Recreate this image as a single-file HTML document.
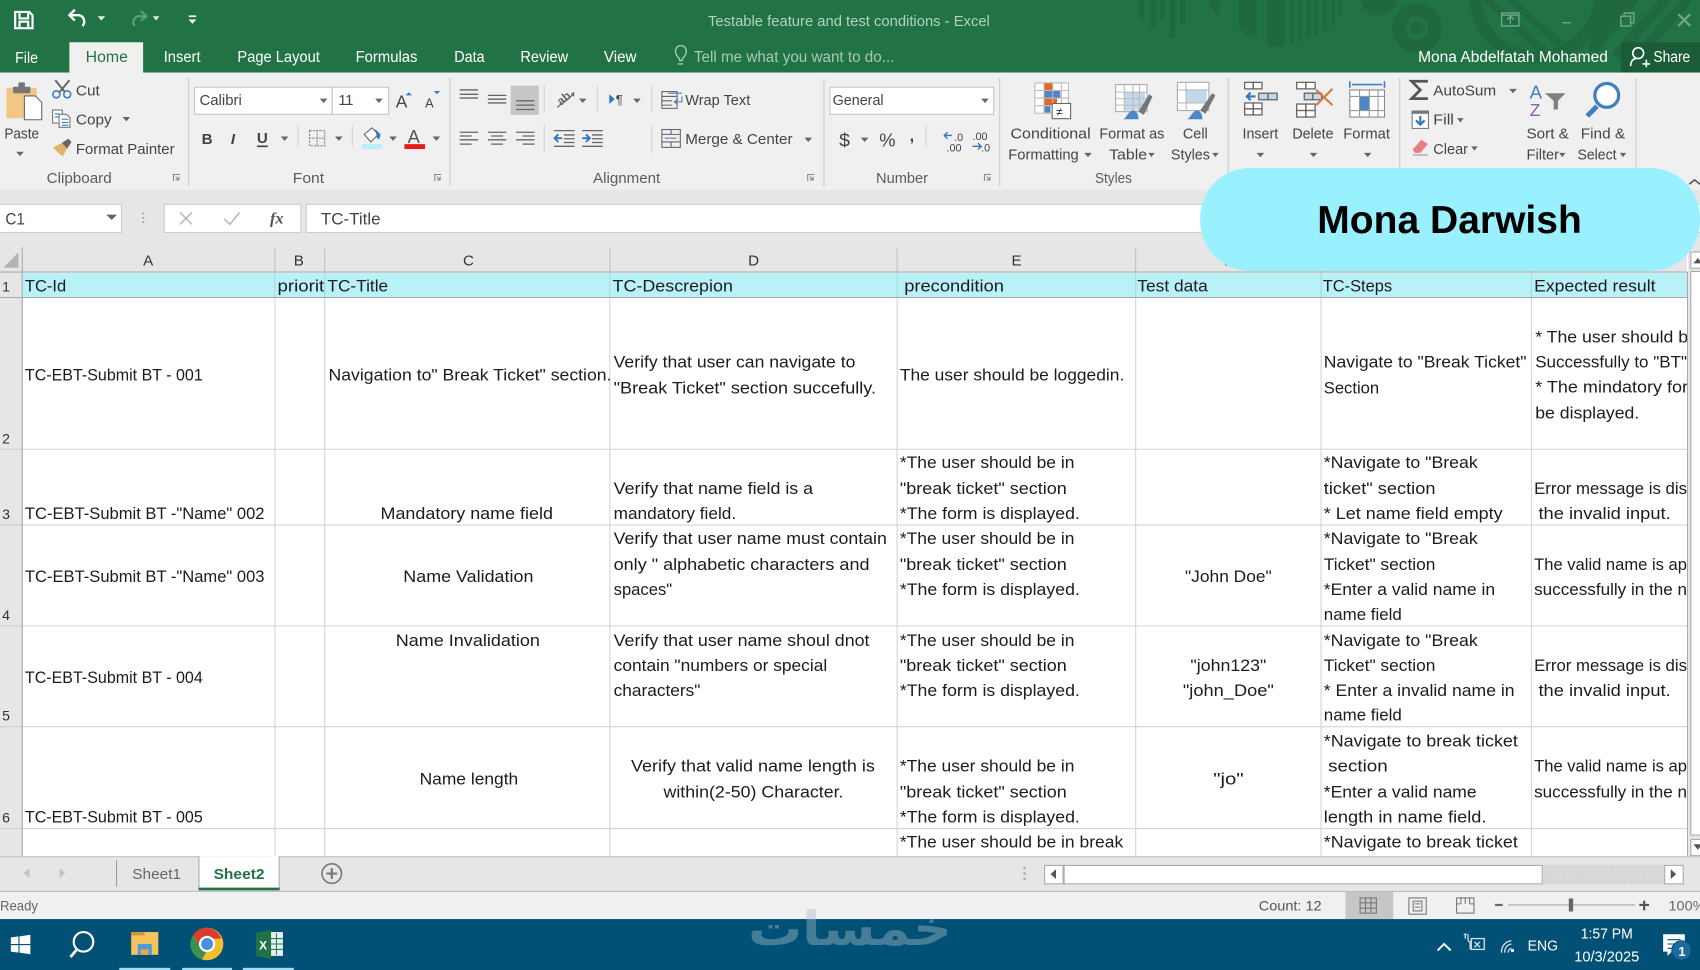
<!DOCTYPE html>
<html><head><meta charset="utf-8"><title>Excel</title>
<style>
html,body{margin:0;padding:0;background:#fff;width:1700px;height:970px;overflow:hidden}
svg{display:block;position:absolute;left:0;top:0}
text{font-family:"Liberation Sans",sans-serif;white-space:pre}
.c text{font-size:15px;fill:#1c1c1c}
.r text{font-size:14px;fill:#444}
.g text{font-size:14px;fill:#5c5c5c}
.t text{font-size:14.5px;fill:#fff}
.h text{font-size:14px;fill:#333}
</style></head><body>
<svg width="1700" height="970" viewBox="0 0 1568 895" preserveAspectRatio="none" xmlns="http://www.w3.org/2000/svg">
<defs><clipPath id="gr"><rect x="21" y="251" width="1535" height="539"/></clipPath>
<clipPath id="bc"><rect x="300" y="251" width="262" height="24"/></clipPath>
<pattern id="dots" width="2" height="2" patternUnits="userSpaceOnUse"><rect width="2" height="2" fill="#dcdcdc"/><rect width="1" height="1" fill="#cfcfcf"/></pattern></defs>

<!-- title bar -->
<rect width="1568" height="67" fill="#217346"/>
<g fill="#1f6840">
<rect x="1050" y="0" width="5" height="18"/><rect x="1061" y="0" width="5" height="26"/><rect x="1070" y="0" width="4" height="18"/><rect x="1079" y="0" width="5" height="35"/><rect x="1089" y="0" width="4" height="22"/>
<path d="M1115 0h10v14l-4-2-6-8z"/><path d="M1143 0h16v36l-8-3-8-6z"/><rect x="1169" y="0" width="16" height="43"/>
<rect x="1190" y="0" width="4" height="41"/><rect x="1197" y="0" width="4" height="38"/><rect x="1205" y="0" width="4" height="35"/><rect x="1212" y="0" width="4" height="33"/><rect x="1220" y="0" width="4" height="28"/><rect x="1228" y="0" width="3" height="23"/><rect x="1235" y="0" width="3" height="15"/>
<circle cx="1272" cy="-3" r="17"/>
<path fill-rule="evenodd" d="M1307 3a23 23 0 1 0 .01 0zM1307 15a11 11 0 1 1-.01 0z"/><circle cx="1307" cy="26" r="6"/>
<path d="M1355 0c3 30 25 58 62 58s62-28 63-58h-10c-1 24-25 47-53 47s-48-22-51-47z"/>
<path d="M1378 0l48 45-7 3-52-48zM1398 0l44 38-6 5-48-43zM1480 0l32 0-40 50-8-4zM1530 0l12 0-48 55-8-5zM1550 0l12 0-48 55-8-5z"/>
</g>
<rect x="1495" y="39" width="73" height="28" fill="#1a5c38"/>
<rect x="64" y="39" width="68" height="28" fill="#f0f0f0"/>
<!-- QAT -->
<g fill="none" stroke="#fff" stroke-width="2">
<path d="M14 11h13l3 3v12H14zM18 11v6h8v-6M18 26v-6h8v6"/>
<path d="M69 9l-5 5 5 5M64 14h9a6 6 0 0 1 3 10" stroke-width="2.200"/>
<path d="M130 10l5 5-5 4M135 15h-8a6 6 0 0 0-3 9" stroke="#5f9d7b"/>
<path d="M174 15h7" stroke-width="1.500"/>
</g>
<path d="M90 15h7l-3.500 4zM141 15h6l-3 4z" fill="#e6f0ea"/><path d="M174 18h7l-3.500 4z" fill="#fff"/>
<g class="t">
<text x="653" y="24" textLength="260" lengthAdjust="spacingAndGlyphs" style="font-size:14px;fill:#b4d2c1">Testable feature and test conditions - Excel</text>
<text x="14" y="58" textLength="21" lengthAdjust="spacingAndGlyphs">File</text>
<text x="79" y="57" textLength="39" lengthAdjust="spacingAndGlyphs" style="fill:#217346">Home</text>
<text x="151" y="57" textLength="34" lengthAdjust="spacingAndGlyphs">Insert</text>
<text x="219" y="57" textLength="76" lengthAdjust="spacingAndGlyphs">Page Layout</text>
<text x="328" y="57" textLength="57" lengthAdjust="spacingAndGlyphs">Formulas</text>
<text x="419" y="57" textLength="28" lengthAdjust="spacingAndGlyphs">Data</text>
<text x="480" y="57" textLength="44" lengthAdjust="spacingAndGlyphs">Review</text>
<text x="557" y="57" textLength="30" lengthAdjust="spacingAndGlyphs">View</text>
<text x="640" y="57" textLength="185" lengthAdjust="spacingAndGlyphs" style="fill:#a6c9b6">Tell me what you want to do...</text>
<text x="1308" y="57" textLength="175" lengthAdjust="spacingAndGlyphs">Mona Abdelfatah Mohamed</text>
<text x="1525" y="57" textLength="34" lengthAdjust="spacingAndGlyphs">Share</text>
</g>
<path d="M627 56c0-3-4-4-4-9a5 5 0 0 1 10 0c0 5-4 6-4 9zM625 59h5" fill="none" stroke="#a6c9b6" stroke-width="1.300"/>
<g fill="none" stroke="#fff" stroke-width="1.500"><circle cx="1511" cy="49" r="5"/><path d="M1504 61c0-5 3-7 5-7M1515 59h7M1518.500 55v7"/></g>
<g fill="none" stroke="#6ea78a" stroke-width="1.300"><rect x="1385" y="12" width="16" height="12"/><path d="M1393 22v-6M1390 18l3-3 3 3M1385 14h16"/><path d="M1441 21h8"/><rect x="1495" y="15" width="9" height="9"/><path d="M1498 15v-3h9v9h-3"/><path d="M1548 13l11 11M1559 13l-11 11" stroke-width="2"/></g>

<!-- ribbon -->
<rect y="67" width="1568" height="108" fill="#f0f0f0"/>
<g stroke="#d2d2d2" stroke-width="1.200"><path d="M174 72v100M415 72v100M760 72v100M922 72v100M1133 72v100M1291 72v100M1509 72v100"/>
<path d="M502 79v25M551 79v25M601 79v25M502 115v26M601 115v26M275 116v19M325 116v19M854 116v19" stroke="#d8d8d8"/></g>
<!-- clipboard group -->
<rect x="6" y="81" width="28" height="28" rx="1" fill="#f2c684"/><rect x="12" y="80" width="16" height="6" rx="1" fill="#777"/><rect x="17" y="76" width="6" height="5" rx="1" fill="#777"/>
<path d="M22.500 88.500h10l6 6v16h-16z" fill="#fff" stroke="#666"/>
<g fill="none" stroke="#666" stroke-width="1.800"><path d="M51 74l9 11M64 74l-9 11"/></g><g fill="none" stroke="#3f7fc2" stroke-width="1.500"><circle cx="52" cy="87" r="3.200"/><circle cx="62" cy="87" r="3.200"/></g>
<g fill="#fff" stroke="#777"><rect x="48.500" y="101.500" width="9" height="12"/><path d="M54.500 105.500h7l3 3v9h-10z"/></g><path d="M50.500 105h4M50.500 108h4M57 110h6M57 113h6M57 115.500h6" stroke="#3f7fc2"/>
<path d="M49 136l8-4 5 5-4 7c-3-1-6-5-9-8z" fill="#e2b36b"/><path d="M57 132l6-4 3 3-4 6z" fill="#666"/>
<g class="r">
<text x="70" y="88" textLength="22" lengthAdjust="spacingAndGlyphs">Cut</text>
<text x="70" y="115" textLength="33" lengthAdjust="spacingAndGlyphs">Copy</text>
<text x="70" y="142" textLength="91" lengthAdjust="spacingAndGlyphs">Format Painter</text>
<text x="4" y="128" textLength="32" lengthAdjust="spacingAndGlyphs">Paste</text>
<text x="632" y="97" textLength="60" lengthAdjust="spacingAndGlyphs">Wrap Text</text>
<text x="632" y="133" textLength="99" lengthAdjust="spacingAndGlyphs">Merge &amp; Center</text>
<text x="932" y="128" textLength="74" lengthAdjust="spacingAndGlyphs">Conditional</text>
<text x="930" y="147" textLength="65" lengthAdjust="spacingAndGlyphs">Formatting</text>
<text x="1014" y="128" textLength="60" lengthAdjust="spacingAndGlyphs">Format as</text>
<text x="1023" y="147" textLength="35" lengthAdjust="spacingAndGlyphs">Table</text>
<text x="1091" y="128" textLength="23" lengthAdjust="spacingAndGlyphs">Cell</text>
<text x="1080" y="147" textLength="36" lengthAdjust="spacingAndGlyphs">Styles</text>
<text x="1146" y="128" textLength="33" lengthAdjust="spacingAndGlyphs">Insert</text>
<text x="1192" y="128" textLength="38" lengthAdjust="spacingAndGlyphs">Delete</text>
<text x="1239" y="128" textLength="43" lengthAdjust="spacingAndGlyphs">Format</text>
<text x="1322" y="88" textLength="58" lengthAdjust="spacingAndGlyphs">AutoSum</text>
<text x="1322" y="115" textLength="19" lengthAdjust="spacingAndGlyphs">Fill</text>
<text x="1322" y="142" textLength="32" lengthAdjust="spacingAndGlyphs">Clear</text>
<text x="1408" y="128" textLength="39" lengthAdjust="spacingAndGlyphs">Sort &amp;</text>
<text x="1408" y="147" textLength="30" lengthAdjust="spacingAndGlyphs">Filter</text>
<text x="1458" y="128" textLength="41" lengthAdjust="spacingAndGlyphs">Find &amp;</text>
<text x="1455" y="147" textLength="36" lengthAdjust="spacingAndGlyphs">Select</text>
</g>
<g class="g">
<text x="43" y="169" textLength="60" lengthAdjust="spacingAndGlyphs">Clipboard</text>
<text x="270" y="169" textLength="29" lengthAdjust="spacingAndGlyphs">Font</text>
<text x="547" y="169" textLength="62" lengthAdjust="spacingAndGlyphs">Alignment</text>
<text x="808" y="169" textLength="48" lengthAdjust="spacingAndGlyphs">Number</text>
<text x="1010" y="169" textLength="34" lengthAdjust="spacingAndGlyphs">Styles</text>
</g>
<!-- launchers -->
<g fill="none" stroke="#888"><path d="M160 167v-6h6M165 166l-3-3M165 163v3h-3M401 167v-6h6M406 166l-3-3M406 163v3h-3M745 167v-6h6M750 166l-3-3M750 163v3h-3M908 167v-6h6M913 166l-3-3M913 163v3h-3"/></g>
<!-- font -->
<rect x="179.500" y="80.500" width="127" height="25" fill="#fff" stroke="#c6c6c6"/><rect x="306.500" y="80.500" width="52" height="25" fill="#fff" stroke="#c6c6c6"/>
<rect x="765.500" y="80.500" width="151" height="25" fill="#fff" stroke="#c6c6c6"/>
<g class="r"><text x="184" y="97" textLength="39" lengthAdjust="spacingAndGlyphs">Calibri</text><text x="312" y="97" textLength="14">11</text>
<text x="768" y="97" textLength="47" lengthAdjust="spacingAndGlyphs">General</text></g>
<g class="r">
<text x="186" y="133" style="font-weight:bold;font-size:14px">B</text>
<text x="213" y="133" style="font-style:italic;font-weight:bold;font-size:14px">I</text>
<text x="237" y="132" style="font-weight:bold;font-size:14px">U</text>
<text x="365" y="99" style="font-size:16px">A</text><text x="392" y="99" style="font-size:12px">A</text>
<text x="376" y="132" style="font-size:17px;fill:#555">A</text></g>
<path d="M237 135h10" stroke="#444" stroke-width="1.500"/>
<path d="M374 88l3-3 3 3zM400 84h6l-3 3z" fill="#3f7fc2"/>
<rect x="373" y="133" width="19" height="4.500" fill="#e81c1c"/><rect x="334" y="133" width="18" height="4.500" fill="#b8f0f7"/>
<path d="M336 124l7-6 6 6-7 7z" fill="#fff" stroke="#666"/><path d="M346 119l5 5-1 4h-2z" fill="#2f78c0"/>
<g fill="none" stroke="#888" stroke-dasharray="2 1"><rect x="285.500" y="120.500" width="14" height="14"/><path d="M292.500 120v14M285 127.500h15"/></g>
<path d="M295 91h7l-3.500 4zM346 91h7l-3.500 4zM259 126h7l-3.500 4zM309 126h7l-3.500 4zM359 126h7l-3.500 4zM399 126h7l-3.500 4zM15 140h7l-3.500 4zM113 108h7l-3.500 4z M534 91h7l-3.500 4zM584 91h7l-3.500 4zM742 127h7l-3.500 4zM905 91h7l-3.500 4zM794 127h7l-3.500 4zM1000 141h7l-3.500 4zM1059 141h6l-3 4zM1118 141h6l-3 4zM1159 141h7l-3.500 4zM1208 141h7l-3.500 4zM1258 141h7l-3.500 4zM1392 82h7l-3.500 4zM1344 109h6l-3 4zM1357 135h6l-3 4zM1438 141h6l-3 4zM1494 141h6l-3 4z" fill="#666"/>
<rect x="471" y="79" width="26" height="27" fill="#c6c6c6"/>
<g stroke="#666" stroke-width="1.200" fill="none">
<path d="M424 83h17M424 87h17M424 90.500h17M450 88h17M450 91.500h17M450 95h17M476 93h17M476 97h17M476 101h17"/>
<path d="M424 122h17M424 125.500h11M424 129h17M424 133h11M450 122h17M453 125.500h11M450 129h17M453 133h11M476 122h17M482 125.500h11M476 129h17M482 133h11"/>
<path d="M511 120.500h19M520 124.500h10M520 128h10M520 131.500h10M511 135h19M537 120.500h19M546 124.500h10M546 128h10M546 131.500h10M537 135h19"/>
<path d="M514 99l15-12M527 86l2 2 0-3"/>
</g>
<path d="M518.500 127.500h-7m3.500-3.500l-3.500 3.500 3.500 3.500" stroke="#2f78c0" fill="none" stroke-width="1.800"/><path d="M537 127.500h7m-3.500-3.500l3.500 3.500-3.500 3.500" stroke="#2f78c0" fill="none" stroke-width="1.800"/>
<text x="514" y="96" transform="rotate(-40 518 92)" style="font-size:11px;font-weight:bold" fill="#666">ab</text>
<path d="M562 87l5 4.500-5 4.500z" fill="#2f78c0"/><text x="568" y="96" style="font-size:12px" fill="#444">¶</text>
<!-- wrap / merge -->
<g fill="none" stroke="#666"><rect x="610.500" y="84.500" width="14" height="15.500"/><path d="M610 89h14M610 93h10M610 97h10"/><path d="M616 86h13M629 89v5h-7m3-2.500l-3 2.500 3 2.500" stroke="#3f7fc2"/></g>
<g fill="none" stroke="#666"><rect x="610.500" y="119.500" width="17" height="16.500"/><path d="M610 124h17M610 131h17M619 119v5M619 131v5"/><path d="M613 127.500h11" stroke="#3f7fc2"/></g>
<!-- number -->
<g class="r"><text x="774" y="135" textLength="10" lengthAdjust="spacingAndGlyphs" style="font-size:17px">$</text><text x="811" y="135" textLength="15" lengthAdjust="spacingAndGlyphs" style="font-size:17px">%</text><text x="839" y="130" style="font-size:15px;font-weight:bold">,</text>
<text x="880" y="130" style="font-size:10px">.0</text><text x="873" y="140" style="font-size:10px">.00</text><text x="897" y="129" style="font-size:10px">.00</text><text x="905" y="140" style="font-size:10px">.0</text></g>
<path d="M878 125h-7m3-3l-3 3 3 3M897 135h8m-3-3l3 3-3 3" stroke="#2f78c0" fill="none" stroke-width="1.300"/>
<!-- conditional -->
<rect x="954" y="76" width="32" height="28" fill="#fff"/>
<rect x="963" y="76" width="8" height="7" fill="#e8642a"/><rect x="963" y="83" width="15" height="7" fill="#4d86c6"/><rect x="963" y="90" width="12" height="7" fill="#e8642a"/><rect x="963" y="97" width="6" height="7" fill="#4d86c6"/>
<path d="M954.500 76.500h31v28h-31zM954 83.500h32M954 90.500h32M954 97.500h32M963 76v28M971 76v28M979 76v28" stroke="#bbb" fill="none"/>
<rect x="970.500" y="95.500" width="17" height="14" fill="#fff" stroke="#666"/><text x="974" y="107" style="font-size:11px" fill="#333">≠</text>
<rect x="1029" y="78" width="29" height="25" fill="#fff" stroke="#aaa"/><rect x="1037" y="85" width="19" height="17" fill="#c4d8ec"/><path d="M1029 85h29M1029 91h29M1029 97h29M1037 78v25M1045 78v25M1051 78v25" stroke="#bbb" fill="none"/>
<path d="M1050 103l10-16 3 2-8 17z" fill="#777"/><path d="M1036 110c3-1 5-8 9-8 3 0 5 3 5 8z" fill="#4d86c6"/>
<rect x="1086" y="76" width="29" height="26" fill="#fff" stroke="#aaa"/><rect x="1094" y="83" width="19" height="12" fill="#c4d8ec"/><path d="M1086 83h29M1094 76v26M1086 95h29" stroke="#bbb" fill="none"/>
<path d="M1107 102l11-16 3 2-9 17z" fill="#777"/><path d="M1095 110c3-1 5-8 9-8 3 0 5 3 5 8z" fill="#4d86c6"/>
<!-- insert delete format -->
<g fill="#fff" stroke="#666" stroke-width="1.200"><rect x="1148" y="76" width="8" height="6"/><rect x="1156" y="76" width="8" height="6"/><rect x="1148" y="95" width="8" height="5.500"/><rect x="1156" y="95" width="8" height="5.500"/><rect x="1148" y="100.500" width="8" height="5.500"/><rect x="1156" y="100.500" width="8" height="5.500"/>
<rect x="1161" y="86" width="8.500" height="6" fill="#c4d8ec"/><rect x="1169.500" y="86" width="8.500" height="6" fill="#c4d8ec"/>
<rect x="1196" y="76" width="8.500" height="6"/><rect x="1204.500" y="76" width="8.500" height="6"/><rect x="1196" y="96" width="8.500" height="6"/><rect x="1204.500" y="96" width="8.500" height="6"/><rect x="1196" y="102" width="8.500" height="6"/><rect x="1204.500" y="102" width="8.500" height="6"/><rect x="1203" y="86" width="8" height="6" fill="#c4d8ec"/><rect x="1211" y="86" width="8" height="6" fill="#c4d8ec"/></g>
<path d="M1158 89h-8m3.500-3.500l-3.500 3.500 3.500 3.500" stroke="#2f78c0" fill="none" stroke-width="2"/>
<path d="M1214 83l15 14M1229 82l-15 15" stroke="#d9773d" stroke-width="2"/>
<rect x="1245" y="83" width="32" height="25" fill="#fff" stroke="#888"/><rect x="1254" y="89" width="9" height="13" fill="#4d86c6"/><path d="M1245 89h32M1245 102h32M1254 83v25M1263 83v25M1271 83v25" stroke="#999" fill="none"/>
<path d="M1245 75v6M1277 75v6M1247 78h28" stroke="#3f7fc2" fill="none" stroke-width="1.500"/>
<!-- editing -->
<path d="M1317 75h-15l8 8-8 8h15" fill="none" stroke="#555" stroke-width="2.500"/>
<rect x="1302.500" y="102.500" width="15" height="16" fill="#fff" stroke="#777"/><rect x="1302" y="102" width="16" height="3" fill="#777"/><path d="M1310 107v8m-4-4l4 4 4-4" stroke="#2f78c0" fill="none" stroke-width="2"/>
<path d="M1303 138l8-9 6 4-7 8h-5z" fill="#e77f7f"/><path d="M1303 143h14" stroke="#999"/>
<text x="1411" y="91" style="font-size:17px" fill="#3f7fc2">A</text><text x="1411" y="107" style="font-size:16px" fill="#8c5fa8">Z</text>
<path d="M1425 86h19l-7 7v8h-4v-8z" fill="#808080"/>
<circle cx="1482" cy="88" r="11" fill="#fff" stroke="#3f7fc2" stroke-width="3"/><path d="M1473 98l-9 9" stroke="#3f7fc2" stroke-width="4.500"/>
<path d="M1558 170l5-4 5 4" stroke="#555" fill="none" stroke-width="1.500"/>

<!-- formula bar -->
<rect y="175" width="1568" height="53" fill="#e6e6e6"/>
<rect x="-1" y="188.500" width="113" height="26" fill="#fff" stroke="#ccc"/>
<rect x="151.500" y="188.500" width="126" height="26" fill="#fff" stroke="#ccc"/>
<rect x="282.500" y="188.500" width="1286" height="26" fill="#fff" stroke="#ccc"/>
<path d="M98 198h10l-5 5z" fill="#666"/><circle cx="132" cy="197" r="1" fill="#aaa"/><circle cx="132" cy="201" r="1" fill="#aaa"/><circle cx="132" cy="205" r="1" fill="#aaa"/>
<path d="M166 196l11 11M177 196l-11 11" stroke="#bbb" stroke-width="1.500"/><path d="M207 202l5 5 9-11" fill="none" stroke="#bbb" stroke-width="1.500"/>
<text x="249" y="206" style="font-family:'Liberation Serif',serif;font-style:italic;font-size:15px;font-weight:bold" fill="#555">fx</text>
<g class="c"><text x="5" y="207" textLength="18" lengthAdjust="spacingAndGlyphs" style="fill:#444">C1</text>
<text x="296" y="207" textLength="55" lengthAdjust="spacingAndGlyphs" style="fill:#444">TC-Title</text></g>

<!-- grid -->
<rect x="21" y="251" width="1535" height="539" fill="#fff"/>
<rect x="21" y="252" width="1535" height="22" fill="#b9f1f8"/>
<rect y="228" width="1556" height="23" fill="#e6e6e6"/><rect y="251" width="21" height="539" fill="#e6e6e6"/>
<path d="M17 233v14H3z" fill="#b4b4b4"/>
<g stroke="#d4d4d4" fill="none">
<path d="M253.500 274v516M299.500 274v516M562.500 274v516M827.500 274v516M1047.500 274v516M1218.500 274v516M1412.500 274v516"/>
<path d="M253.500 252v22M299.500 252v22M562.500 252v22M827.500 252v22M1047.500 252v22M1218.500 252v22M1412.500 252v22" stroke="#a8d8de"/>
<path d="M21 414.500h1535M21 484.500h1535M21 577.500h1535M21 670.500h1535M21 764.500h1535"/>
<path d="M253.500 229v22M299.500 229v22M562.500 229v22M827.500 229v22M1047.500 229v22M1218.500 229v22M1412.500 229v22" stroke="#c0c0c0"/>
<path d="M0 274.500h20M0 414.500h20M0 484.500h20M0 577.500h20M0 670.500h20M0 764.500h20" stroke="#cfcfcf"/>
</g>
<path d="M0 251h1556M0 274.500h1556" stroke="#a9a9a9" fill="none"/><path d="M20.500 228v562M1556.500 251v539" stroke="#a9a9a9"/>
<g class="h">
<text x="132" y="245">A</text><text x="271" y="245">B</text><text x="427" y="245">C</text><text x="690" y="245">D</text><text x="933" y="245">E</text><text x="1129" y="245">F</text>
<text x="2" y="269" style="font-size:13px">1</text><text x="2" y="409" style="font-size:13px">2</text><text x="2" y="479" style="font-size:13px">3</text><text x="2" y="572" style="font-size:13px">4</text><text x="2" y="665" style="font-size:13px">5</text><text x="2" y="759" style="font-size:13px">6</text>
</g>
<g class="c" clip-path="url(#gr)">
<text x="23" y="269" textLength="38" lengthAdjust="spacingAndGlyphs">TC-Id</text>
<text x="256" y="269" textLength="43" lengthAdjust="spacingAndGlyphs">priorit</text>
<text x="302" y="269" textLength="56" lengthAdjust="spacingAndGlyphs">TC-Title</text>
<text x="565" y="269" textLength="111" lengthAdjust="spacingAndGlyphs">TC-Descrepion</text>
<text x="834" y="269" textLength="92" lengthAdjust="spacingAndGlyphs">precondition</text>
<text x="1049" y="269" textLength="65" lengthAdjust="spacingAndGlyphs">Test data</text>
<text x="1220" y="269" textLength="64" lengthAdjust="spacingAndGlyphs">TC-Steps</text>
<text x="1415" y="269" textLength="112" lengthAdjust="spacingAndGlyphs">Expected result</text>

<text x="23" y="351" textLength="164" lengthAdjust="spacingAndGlyphs">TC-EBT-Submit BT - 001</text>
<text x="303" y="351" textLength="261" lengthAdjust="spacingAndGlyphs">Navigation to" Break Ticket" section.</text>
<text x="566" y="339" textLength="223" lengthAdjust="spacingAndGlyphs">Verify that user can navigate to</text>
<text x="566" y="363" textLength="242" lengthAdjust="spacingAndGlyphs">"Break Ticket" section succefully.</text>
<text x="830" y="351" textLength="207" lengthAdjust="spacingAndGlyphs">The user should be loggedin.</text>
<text x="1221" y="339" textLength="187" lengthAdjust="spacingAndGlyphs">Navigate to "Break Ticket"</text>
<text x="1221" y="363" textLength="51" lengthAdjust="spacingAndGlyphs">Section</text>
<text x="1416" y="316" textLength="141" lengthAdjust="spacingAndGlyphs">* The user should b</text>
<text x="1416" y="339" textLength="140" lengthAdjust="spacingAndGlyphs">Successfully to "BT"</text>
<text x="1416" y="362" textLength="141" lengthAdjust="spacingAndGlyphs">* The mindatory for</text>
<text x="1416" y="386" textLength="96" lengthAdjust="spacingAndGlyphs">be displayed.</text>

<text x="23" y="479" textLength="221" lengthAdjust="spacingAndGlyphs">TC-EBT-Submit BT -"Name" 002</text>
<text x="351" y="479" textLength="159" lengthAdjust="spacingAndGlyphs">Mandatory name field</text>
<text x="566" y="456" textLength="184" lengthAdjust="spacingAndGlyphs">Verify that name field is a</text>
<text x="566" y="479" textLength="113" lengthAdjust="spacingAndGlyphs">mandatory field.</text>
<text x="830" y="432" textLength="161" lengthAdjust="spacingAndGlyphs">*The user should be in</text>
<text x="830" y="456" textLength="154" lengthAdjust="spacingAndGlyphs">"break ticket" section</text>
<text x="830" y="479" textLength="166" lengthAdjust="spacingAndGlyphs">*The form is displayed.</text>
<text x="1221" y="432" textLength="142" lengthAdjust="spacingAndGlyphs">*Navigate to "Break</text>
<text x="1221" y="456" textLength="103" lengthAdjust="spacingAndGlyphs">ticket" section</text>
<text x="1221" y="479" textLength="165" lengthAdjust="spacingAndGlyphs">* Let name field empty</text>
<text x="1415" y="456" textLength="141" lengthAdjust="spacingAndGlyphs">Error message is dis</text>
<text x="1419" y="479" textLength="122" lengthAdjust="spacingAndGlyphs">the invalid input.</text>

<text x="23" y="537" textLength="221" lengthAdjust="spacingAndGlyphs">TC-EBT-Submit BT -"Name" 003</text>
<text x="372" y="537" textLength="120" lengthAdjust="spacingAndGlyphs">Name Validation</text>
<text x="566" y="502" textLength="252" lengthAdjust="spacingAndGlyphs">Verify that user name must contain</text>
<text x="566" y="526" textLength="236" lengthAdjust="spacingAndGlyphs">only " alphabetic characters and</text>
<text x="566" y="549" textLength="54" lengthAdjust="spacingAndGlyphs">spaces"</text>
<text x="830" y="502" textLength="161" lengthAdjust="spacingAndGlyphs">*The user should be in</text>
<text x="830" y="526" textLength="154" lengthAdjust="spacingAndGlyphs">"break ticket" section</text>
<text x="830" y="549" textLength="166" lengthAdjust="spacingAndGlyphs">*The form is displayed.</text>
<text x="1093" y="537" textLength="80" lengthAdjust="spacingAndGlyphs">"John Doe"</text>
<text x="1221" y="502" textLength="142" lengthAdjust="spacingAndGlyphs">*Navigate to "Break</text>
<text x="1221" y="526" textLength="103" lengthAdjust="spacingAndGlyphs">Ticket" section</text>
<text x="1221" y="549" textLength="158" lengthAdjust="spacingAndGlyphs">*Enter a valid name in</text>
<text x="1221" y="572" textLength="72" lengthAdjust="spacingAndGlyphs">name field</text>
<text x="1415" y="526" textLength="141" lengthAdjust="spacingAndGlyphs">The valid name is ap</text>
<text x="1415" y="549" textLength="141" lengthAdjust="spacingAndGlyphs">successfully in the n</text>

<text x="23" y="630" textLength="164" lengthAdjust="spacingAndGlyphs">TC-EBT-Submit BT - 004</text>
<text x="365" y="596" textLength="133" lengthAdjust="spacingAndGlyphs">Name Invalidation</text>
<text x="566" y="596" textLength="236" lengthAdjust="spacingAndGlyphs">Verify that user name shoul dnot</text>
<text x="566" y="619" textLength="197" lengthAdjust="spacingAndGlyphs">contain "numbers or special</text>
<text x="566" y="642" textLength="80" lengthAdjust="spacingAndGlyphs">characters"</text>
<text x="830" y="596" textLength="161" lengthAdjust="spacingAndGlyphs">*The user should be in</text>
<text x="830" y="619" textLength="154" lengthAdjust="spacingAndGlyphs">"break ticket" section</text>
<text x="830" y="642" textLength="166" lengthAdjust="spacingAndGlyphs">*The form is displayed.</text>
<text x="1098" y="619" textLength="70" lengthAdjust="spacingAndGlyphs">"john123"</text>
<text x="1091" y="642" textLength="84" lengthAdjust="spacingAndGlyphs">"john_Doe"</text>
<text x="1221" y="596" textLength="142" lengthAdjust="spacingAndGlyphs">*Navigate to "Break</text>
<text x="1221" y="619" textLength="103" lengthAdjust="spacingAndGlyphs">Ticket" section</text>
<text x="1221" y="642" textLength="176" lengthAdjust="spacingAndGlyphs">* Enter a invalid name in</text>
<text x="1221" y="665" textLength="72" lengthAdjust="spacingAndGlyphs">name field</text>
<text x="1415" y="619" textLength="141" lengthAdjust="spacingAndGlyphs">Error message is dis</text>
<text x="1419" y="642" textLength="122" lengthAdjust="spacingAndGlyphs">the invalid input.</text>

<text x="23" y="759" textLength="164" lengthAdjust="spacingAndGlyphs">TC-EBT-Submit BT - 005</text>
<text x="387" y="724" textLength="91" lengthAdjust="spacingAndGlyphs">Name length</text>
<text x="582" y="712" textLength="225" lengthAdjust="spacingAndGlyphs">Verify that valid name length is</text>
<text x="612" y="736" textLength="166" lengthAdjust="spacingAndGlyphs">within(2-50) Character.</text>
<text x="830" y="712" textLength="161" lengthAdjust="spacingAndGlyphs">*The user should be in</text>
<text x="830" y="736" textLength="154" lengthAdjust="spacingAndGlyphs">"break ticket" section</text>
<text x="830" y="759" textLength="166" lengthAdjust="spacingAndGlyphs">*The form is displayed.</text>
<text x="1119" y="724" textLength="28" lengthAdjust="spacingAndGlyphs">"jo"</text>
<text x="1221" y="689" textLength="179" lengthAdjust="spacingAndGlyphs">*Navigate to break ticket</text>
<text x="1225" y="712" textLength="55" lengthAdjust="spacingAndGlyphs">section</text>
<text x="1221" y="736" textLength="141" lengthAdjust="spacingAndGlyphs">*Enter a valid name</text>
<text x="1221" y="759" textLength="150" lengthAdjust="spacingAndGlyphs">length in name field.</text>
<text x="1415" y="712" textLength="141" lengthAdjust="spacingAndGlyphs">The valid name is ap</text>
<text x="1415" y="736" textLength="141" lengthAdjust="spacingAndGlyphs">successfully in the n</text>

<text x="830" y="782" textLength="206" lengthAdjust="spacingAndGlyphs">*The user should be in break</text>
<text x="1221" y="782" textLength="179" lengthAdjust="spacingAndGlyphs">*Navigate to break ticket</text>
</g>
<!-- vertical scrollbar -->
<rect x="1557" y="228" width="11" height="562" fill="#e6e6e6"/>
<rect x="1559.500" y="232.500" width="12" height="15" fill="#fff" stroke="#aaa"/><rect x="1559.500" y="250.500" width="12" height="520" fill="#fff" stroke="#aaa"/><rect x="1559.500" y="774.500" width="12" height="15" fill="#fff" stroke="#aaa"/>
<path d="M1562 243l4-5 4 5zM1562 779l4 5 4-5z" fill="#555"/>

<!-- sheet tabs -->
<rect y="790" width="1568" height="33" fill="#e6e6e6"/>
<path d="M0 790.500h1568M0 822.500h1568" stroke="#bdbdbd"/>
<path d="M107.500 794v24" stroke="#999"/>
<path d="M27 801v9l-5-4.500zM55 801v9l5-4.500z" fill="#c2c2c2"/>
<rect x="183" y="790" width="75" height="31" fill="#fff"/><path d="M183.500 790v29M257.500 790v29" stroke="#aaa"/><rect x="183" y="819" width="75" height="2.500" fill="#217346"/>
<text x="122" y="811" textLength="45" lengthAdjust="spacingAndGlyphs" style="font-size:14px" fill="#666">Sheet1</text>
<text x="197" y="811" textLength="47" lengthAdjust="spacingAndGlyphs" style="font-size:14px;font-weight:bold" fill="#217346">Sheet2</text>
<circle cx="306" cy="806" r="9" fill="none" stroke="#777" stroke-width="1.500"/><path d="M301 806h10M306 801v10" stroke="#777" stroke-width="2"/>
<circle cx="945" cy="801" r="1.200" fill="#aaa"/><circle cx="945" cy="806" r="1.200" fill="#aaa"/><circle cx="945" cy="811" r="1.200" fill="#aaa"/>
<rect x="963.500" y="798.500" width="17" height="17" fill="#fff" stroke="#aaa"/>
<rect x="981.500" y="798.500" width="441" height="17" fill="#fff" stroke="#aaa"/>
<rect x="1423" y="798" width="112" height="18" fill="url(#dots)"/>
<rect x="1535.500" y="798.500" width="17" height="17" fill="#fff" stroke="#aaa"/>
<path d="M974 802v9l-5-4.500zM1541 802v9l5-4.500z" fill="#555"/>

<!-- status bar -->
<rect y="823" width="1568" height="25" fill="#f0f0f0"/>
<rect x="1241" y="823" width="44" height="25" fill="#c6c6c6"/>
<text x="0" y="840" textLength="35" lengthAdjust="spacingAndGlyphs" style="font-size:13px" fill="#666">Ready</text>
<text x="1161" y="840" textLength="58" lengthAdjust="spacingAndGlyphs" style="font-size:13px" fill="#555">Count: 12</text>
<g fill="none" stroke="#777"><rect x="1254.500" y="828.500" width="15" height="14"/><path d="M1259.500 828v14M1264.500 828v14M1254 833h16M1254 838h16"/>
<rect x="1299.500" y="828.500" width="16" height="15"/><rect x="1303.500" y="831.500" width="8" height="9"/><path d="M1305 834h5M1305 837h5"/>
<rect x="1343.500" y="828.500" width="16" height="14"/><path d="M1343 834h4M1351.500 828v6M1347.500 834v-6M1355.500 834v-6M1355.500 834h4"/></g>
<path d="M1379 835h7" stroke="#666" stroke-width="2"/><path d="M1391 835h117" stroke="#aaa"/><rect x="1447" y="829" width="4" height="12" fill="#666"/><path d="M1512 835h9M1516.500 831v9" stroke="#555" stroke-width="2"/>
<text x="1539" y="840" textLength="34" lengthAdjust="spacingAndGlyphs" style="font-size:13px" fill="#666">100%</text>

<!-- taskbar -->
<rect y="848" width="1568" height="47" fill="#005175"/>
<path d="M10 865l7-1v7h-7zM18 864l10-1.500v8.500H18zM10 872h7v7l-7-1zM18 872h10v8.500L18 879z" fill="#fff"/>
<circle cx="77" cy="869" r="9" fill="none" stroke="#fff" stroke-width="2"/><path d="M71 876l-6 7" stroke="#fff" stroke-width="2.500"/>
<rect x="121" y="860" width="25" height="21" fill="#f6c35f"/><path d="M121 860h11l2 3h-13z" fill="#d9912a"/><path d="M127 881v-10h13v10h-3v-5h-7v5z" fill="#4d9cd9"/><rect x="130" y="876" width="7" height="5" fill="#eea83c"/>
<circle cx="191" cy="871" r="15" fill="#f2bd2f"/><path d="M191 856a15 15 0 0 0-13 7l7 11 6-8h13a15 15 0 0 0-13-10z" fill="#dc3c30"/><path d="M178 863a15 15 0 0 0 8 22.500l6-10-7-1z" fill="#3d8f52"/><circle cx="191" cy="871" r="7.500" fill="#fff"/><circle cx="191" cy="871" r="5.500" fill="#4a90d9"/>
<rect x="244" y="860" width="17" height="22" fill="#fff" opacity=".9"/><path d="M249 861v20M255 861v20M244 866h17M244 871h17M244 876h17" stroke="#2f7d52"/><path d="M236 861l14-3v27l-14-3z" fill="#217346"/>
<text x="239" y="876" style="font-size:11px;font-weight:bold" fill="#fff">X</text>
<g fill="#9fdcf5"><rect x="110" y="893" width="47" height="2"/><rect x="168" y="893" width="46" height="2"/><rect x="224" y="893" width="47" height="2"/></g>
<text x="784" y="872" text-anchor="middle" direction="rtl" textLength="188" lengthAdjust="spacingAndGlyphs" style="font-family:'DejaVu Sans',sans-serif;font-size:44px;font-weight:bold" fill="#a8bcc8" opacity=".42">خمسات</text>
<path d="M1326 877l6-6 6 6" fill="none" stroke="#fff" stroke-width="1.800"/>
<g fill="none" stroke="#d6e4ea" stroke-width="1.200"><rect x="1357" y="866" width="12" height="10"/><path d="M1354 862v5a2 2 0 0 0 2 2v7M1351.500 862v4M1353 862h-3M1360 869l5 5M1365 869l-5 5"/>
<path d="M1385 879a10 10 0 0 1 9-11M1388 879a7 7 0 0 1 6-8M1391 879a4 4 0 0 1 3-4"/></g><circle cx="1395" cy="877" r="1.500" fill="#fff"/>
<g class="t">
<text x="1409" y="877" textLength="28" lengthAdjust="spacingAndGlyphs" style="font-size:14px">ENG</text>
<text x="1458" y="866" textLength="48" lengthAdjust="spacingAndGlyphs" style="font-size:14px">1:57 PM</text>
<text x="1452" y="887" textLength="60" lengthAdjust="spacingAndGlyphs" style="font-size:14px">10/3/2025</text>
</g>
<path d="M1534 862h20v16h-12l-4 4v-4h-4z" fill="#fff"/><path d="M1538 867h12M1538 871h12M1538 875h9" stroke="#005175"/>
<circle cx="1551" cy="877" r="9" fill="#1a6ba0" stroke="#0d4a70"/><text x="1548" y="882" style="font-size:12px;font-weight:bold" fill="#fff">1</text>

<!-- badge -->
<rect x="1107" y="155" width="461" height="95" rx="46" fill="#99f0ff"/>
<text x="1337" y="215" text-anchor="middle" textLength="244" lengthAdjust="spacingAndGlyphs" style="font-size:36px;font-weight:bold" fill="#000">Mona Darwish</text>
</svg>
</body></html>
